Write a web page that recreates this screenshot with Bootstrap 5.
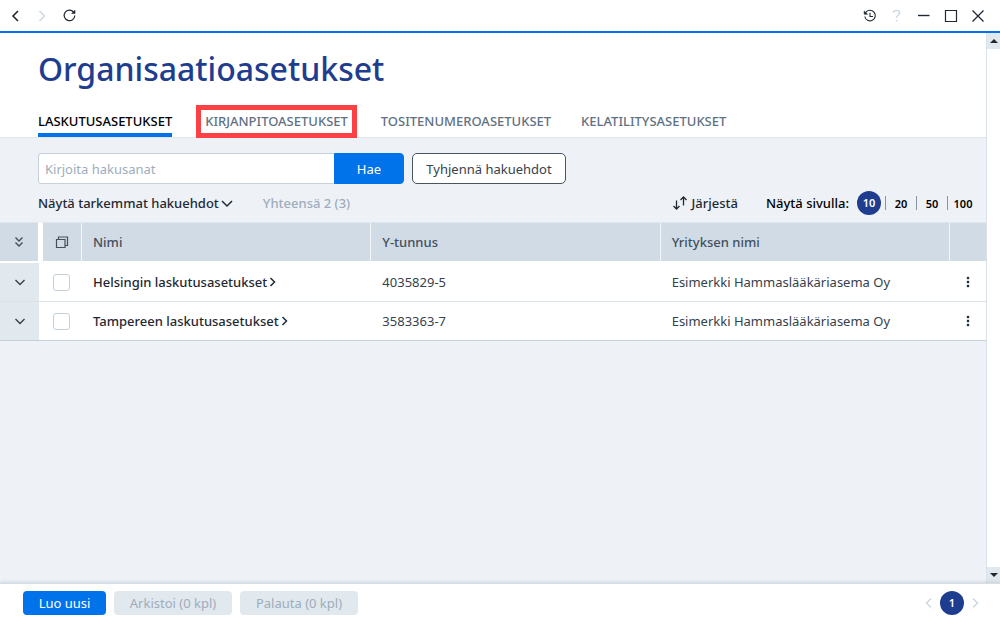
<!DOCTYPE html>
<html lang="fi">
<head>
<meta charset="utf-8">
<meta name="viewport" content="width=device-width, initial-scale=1">
<title>Organisaatioasetukset</title>
<link href="https://cdn.jsdelivr.net/npm/bootstrap@5.3.0/dist/css/bootstrap.min.css" rel="stylesheet">
<style>
  :root { --ink:#1f2933; --blue:#0073ea; --navy:#1f3d8f; --pale:#eef2f7; --head:#d1dbe5; --line:#d9e1e9; --muted:#9dadbc; }
  body { font-family:"Noto Sans","Open Sans",sans-serif; font-size:13px; line-height:20px; color:var(--ink); background:#fff; }
  svg { display:block; fill:none; stroke:currentColor; }
  button { font:inherit; color:inherit; }
  .plain-btn { background:none; border:0; padding:0; }
  .plain-btn:disabled { color:#cbd7e4; }
  .semi { font-weight:500; }
  .title-bar { height:33px; border-bottom:2px solid var(--blue); padding:0 14px 0 8px; }
  .title-bar .btn-group-gap { gap:11px; }
  .title-bar button { width:16px; height:16px; display:grid; place-items:center; }
  .content-area { background:var(--pale); }
  .page-title { font-size:32px; line-height:48px; font-weight:500; color:var(--navy); padding:12px 38px 0; margin:0; }
  .tab-row { margin-left:38px; gap:24px; padding-top:12px; height:44px; }
  .tab-row a { color:#5f7182; text-decoration:none; font-weight:500; white-space:nowrap; height:32px; line-height:33px; }
  .tab-row a.active { color:#000; border-bottom:4px solid var(--blue); }
  .tab-row a.marked { border:5px solid #fc4144; padding:0 4px; line-height:23px; height:33px; }
  .tab-row a.spaced { margin-right:6px; }
  .header-area { border-bottom:1px solid #dfe6ec; }
  .filter-area { padding:15px 8px 0 38px; height:84px; }
  .search-box { width:366px; }
  .search-box .form-control { font-size:13px; height:31px; border:1px solid #c5d0db; border-radius:3px 0 0 3px; padding:4px 6px; }
  .search-box .form-control::placeholder { color:var(--muted); }
  .search-box .btn { width:70px; border-radius:0 4px 4px 0; }
  .tool-btn { font-size:13px; line-height:20px; padding:0 8px; border-radius:4px; }
  .btn-blue, .btn-blue:hover { background:var(--blue); color:#fff; border-color:var(--blue); }
  .clear-btn, .clear-btn:hover { background:#fff; border:1px solid #48545f; color:#35414c; width:154px; height:31px; border-radius:5px; }
  .options-row { padding-top:7px; }
  .count-note { color:var(--muted); }
  .size-item { font-size:11px; line-height:24px; font-weight:600; color:#000; }
  .size-item.plain { width:31px; text-align:center; height:14px; line-height:13px; border-left:1px solid #8795a3; }
  .size-item.page-dot { width:24px; height:24px; border-radius:50%; background:var(--navy); color:#fff; text-align:center; }
  .grid-table { table-layout:fixed; border-collapse:separate; border-spacing:0; width:100%; background:#fff; }
  .grid-table th { background:var(--head); height:41px; font-weight:500; color:#42505e; padding:0 11px; border-left:1px solid #f3f6f9; border-bottom:2px solid #fff; border-top:1px solid #e1e7ed; }
  .grid-table th:first-child { border-left:0; border-right:1px solid #fff; }
  .grid-table th.pick { border-left:4px solid #fff; }
  .grid-table td { height:39px; padding:0 12px; border-bottom:1px solid var(--line); color:#35414c; }
  .grid-table td:first-child { background:#e1e8ee; }
  .grid-table tbody tr:last-child td { border-bottom-color:#c5d0db; }
  .grid-table a { color:var(--ink); text-decoration:none; font-weight:500; }
  .grid-table th.tight, .grid-table td.tight { padding:0; }
  .grid-table td.pick { padding:0 0 0 3px; }
  .grid-table .form-check-input { width:17px; height:17px; border:1px solid #c4d0dd; border-radius:3px; margin:0 auto; }
  .col-exp { width:39px; } .col-pick { width:42px; } .col-menu { width:37px; }
  .scroll-rail { width:14px; border-left:1px solid var(--line); background:#fff; }
  .scroll-rail button { height:16px; background:#e1e8ee; width:100%; display:grid; place-items:center; }
  .foot-bar { height:38px; padding:0 18px 0 23px; box-shadow:0 -1px 3px #9eaab666; border-top:1px solid #d6dde3; z-index:1; }
  .foot-bar .tool-btn { height:24px; border:0; }
  .foot-bar .btn:disabled { background:#e1e8ee; color:var(--muted); opacity:1; }
  .w-create { width:83px; } .w-bulk { width:118px; }
</style>
</head>
<body>
<div class="d-flex flex-column vh-100">
  <header class="title-bar d-flex align-items-center justify-content-between flex-shrink-0">
    <div class="d-flex btn-group-gap">
      <button class="plain-btn" aria-label="Takaisin"><svg width="16" height="16" stroke-width="1.6"><path d="M10 3 5 8l5 5"/></svg></button>
      <button class="plain-btn" aria-label="Eteenpäin" disabled><svg width="16" height="16" stroke-width="1.5"><path d="m4.500 3 5 5-5 5"/></svg></button>
      <button class="plain-btn" aria-label="Päivitä"><svg width="16" height="16" stroke-width="1.2"><path d="M11.600 4A5.300 5.300 0 1 0 12.800 7.500"/><path d="M9.700 5.500H13V2.200Z" fill="currentColor" stroke-width=".6"/></svg></button>
    </div>
    <div class="d-flex btn-group-gap">
      <button class="plain-btn" aria-label="Historia"><svg width="16" height="16" stroke-width="1.1"><path d="M3.600 4.600A5.300 5.300 0 1 1 2.800 8.500M8 4.800v3.700h3"/><path d="M2.200 3v3.200h3.300Z" fill="currentColor" stroke-width=".6"/></svg></button>
      <button class="plain-btn" aria-label="Ohje" disabled><svg width="16" height="16" stroke-width="1.4"><path d="M4.500 4.800C4.500 1.500 10.600 1.500 10.600 4.800c0 2.400-3.100 2.500-3.100 5M7.500 11.800v1.700"/></svg></button>
      <button class="plain-btn" aria-label="Pienennä"><svg width="16" height="16" stroke-width="1.4"><path d="M2 7.500h11.500"/></svg></button>
      <button class="plain-btn" aria-label="Suurenna"><svg width="16" height="16" stroke-width="1.2"><path d="M2.500 2.500h11v11h-11z"/></svg></button>
      <button class="plain-btn" aria-label="Sulje"><svg width="16" height="16" stroke-width="1.3"><path d="m2.500 2.500 11 11m0-11-11 11"/></svg></button>
    </div>
  </header>

  <div class="d-flex flex-grow-1 overflow-hidden">
    <main class="content-area flex-grow-1 overflow-hidden">
      <div class="header-area bg-white">
        <h1 class="page-title">Organisaatioasetukset</h1>
        <nav class="tab-row d-flex">
          <a href="#" class="active">LASKUTUSASETUKSET</a>
          <a href="#" class="marked">KIRJANPITOASETUKSET</a>
          <a href="#" class="spaced">TOSITENUMEROASETUKSET</a>
          <a href="#">KELATILITYSASETUKSET</a>
        </nav>
      </div>

      <div class="filter-area">
        <div class="d-flex gap-2">
          <div class="input-group flex-nowrap search-box">
            <input type="text" class="form-control" placeholder="Kirjoita hakusanat" aria-label="Hakusanat">
            <button class="btn btn-blue tool-btn">Hae</button>
          </div>
          <button class="btn tool-btn clear-btn">Tyhjennä hakuehdot</button>
        </div>
        <div class="options-row d-flex align-items-center justify-content-between">
          <div class="d-flex align-items-center">
            <button class="plain-btn semi d-flex align-items-center me-4">Näytä tarkemmat hakuehdot <svg width="16" height="16" stroke-width="1.5"><path d="m3 6 5 5 5-5"/></svg></button>
            <span class="semi count-note ms-1">Yhteensä 2 (3)</span>
          </div>
          <div class="d-flex align-items-center">
            <button class="plain-btn semi d-flex align-items-center gap-1 me-4"><svg width="16" height="16" stroke-width="1.3"><path d="M4.500 5.500v8.500M1.500 11l3 3 3-3M11.500 10.500V2M8.500 5l3-3 3 3"/></svg>Järjestä</button>
            <span class="semi text-black ms-1 me-2">Näytä sivulla:</span>
            <div class="d-flex align-items-center">
              <button class="plain-btn size-item page-dot">10</button>
              <button class="plain-btn size-item plain ms-1">20</button>
              <button class="plain-btn size-item plain">50</button>
              <button class="plain-btn size-item plain">100</button>
            </div>
          </div>
        </div>
      </div>

      <table class="grid-table">
        <colgroup><col class="col-exp"><col class="col-pick"><col><col><col><col class="col-menu"></colgroup>
        <thead>
          <tr>
            <th class="tight"><button class="plain-btn d-block mx-auto" aria-label="Avaa kaikki"><svg width="14" height="14" stroke-width="1.4"><path d="m3.500 2.500 3.500 3.500 3.500-3.500M3.500 7.500 7 11l3.500-3.500"/></svg></button></th>
            <th class="tight pick"><button class="plain-btn d-block mx-auto" aria-label="Valitse kaikki"><svg width="14" height="14" stroke-width="1.2"><path d="M1.500 4.500h8.500v8h-8.500zM3.500 4.500v-2.500h9v8.500h-2.500"/></svg></button></th>
            <th>Nimi</th><th>Y-tunnus</th><th>Yrityksen nimi</th><th></th>
          </tr>
        </thead>
        <tbody>
          <tr>
            <td class="tight"><button class="plain-btn d-block mx-auto" aria-label="Avaa rivi"><svg width="14" height="14" stroke-width="1.400"><path d="m2.500 5 4.500 4.500L11.500 5"/></svg></button></td>
            <td class="pick"><input type="checkbox" class="form-check-input d-block" aria-label="Valitse Helsingin laskutusasetukset"></td>
            <td><a href="#" class="d-flex align-items-center">Helsingin laskutusasetukset <svg width="10" height="12" stroke-width="1.500"><path d="m3.500 2 4 4-4 4"/></svg></a></td>
            <td>4035829-5</td><td>Esimerkki Hammaslääkäriasema Oy</td>
            <td class="tight"><button class="plain-btn d-block mx-auto" aria-label="Toiminnot"><svg width="4" height="12"><path d="M1 1h2v2H1zM1 5h2v2H1zM1 9h2v2H1z" fill="#1f2933" stroke-width=".4"/></svg></button></td>
          </tr>
          <tr>
            <td class="tight"><button class="plain-btn d-block mx-auto" aria-label="Avaa rivi"><svg width="14" height="14" stroke-width="1.400"><path d="m2.500 5 4.500 4.500L11.500 5"/></svg></button></td>
            <td class="pick"><input type="checkbox" class="form-check-input d-block" aria-label="Valitse Tampereen laskutusasetukset"></td>
            <td><a href="#" class="d-flex align-items-center">Tampereen laskutusasetukset <svg width="10" height="12" stroke-width="1.500"><path d="m3.500 2 4 4-4 4"/></svg></a></td>
            <td>3583363-7</td><td>Esimerkki Hammaslääkäriasema Oy</td>
            <td class="tight"><button class="plain-btn d-block mx-auto" aria-label="Toiminnot"><svg width="4" height="12"><path d="M1 1h2v2H1zM1 5h2v2H1zM1 9h2v2H1z" fill="#1f2933" stroke-width=".4"/></svg></button></td>
          </tr>
        </tbody>
      </table>
    </main>
    <div class="scroll-rail d-flex flex-column justify-content-between flex-shrink-0">
      <button class="plain-btn" aria-label="Vieritä ylös"><svg width="8" height="4"><path d="M0 4 4 0l4 4z" fill="#1f2933" stroke="none"/></svg></button>
      <button class="plain-btn" aria-label="Vieritä alas"><svg width="8" height="4"><path d="m0 0 4 4 4-4z" fill="#1f2933" stroke="none"/></svg></button>
    </div>
  </div>

  <footer class="foot-bar d-flex align-items-center justify-content-between bg-white flex-shrink-0">
    <div class="d-flex gap-2">
      <button class="btn tool-btn btn-blue w-create">Luo uusi</button>
      <button class="btn tool-btn w-bulk" disabled>Arkistoi (0 kpl)</button>
      <button class="btn tool-btn w-bulk" disabled>Palauta (0 kpl)</button>
    </div>
    <div class="d-flex align-items-center gap-1">
      <button class="plain-btn" aria-label="Edellinen sivu" disabled><svg width="14" height="14" stroke-width="1.500"><path d="M9 2.500 4.500 7 9 11.500"/></svg></button>
      <button class="plain-btn size-item page-dot">1</button>
      <button class="plain-btn" aria-label="Seuraava sivu" disabled><svg width="14" height="14" stroke-width="1.500"><path d="M5 2.500 9.500 7 5 11.500"/></svg></button>
    </div>
  </footer>
</div>
<script src="https://cdn.jsdelivr.net/npm/bootstrap@5.3.0/dist/js/bootstrap.bundle.min.js"></script>
</body>
</html>
